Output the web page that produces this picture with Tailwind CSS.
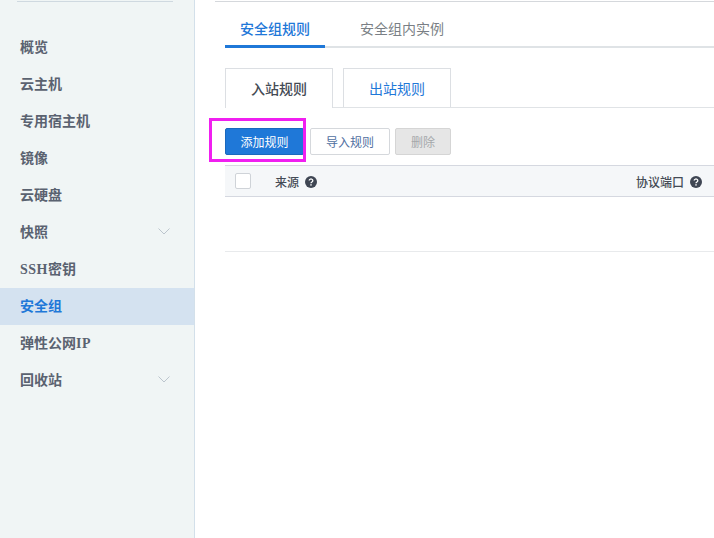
<!DOCTYPE html>
<html lang="zh-CN">
<head>
<meta charset="utf-8">
<script src="https://cdn.jsdelivr.net/npm/@tailwindcss/browser@4"></script>
</head>
<body class="bg-white overflow-hidden">
<div class="flex w-[714px] h-[538px] overflow-hidden font-['Liberation_Serif','Noto_Sans_CJK_SC',serif]">
  <aside class="w-[195px] h-full shrink-0 bg-[#f0f5f5] border-r border-[#d3e0ea]">
    <div class="mx-[17px] mt-px w-[156px] h-px bg-[#cfd9e0]"></div>
    <nav class="mt-[27px] flex flex-col text-[14px] font-bold text-[#5a6270]">
      <a class="h-[37px] pl-5 flex items-center">概览</a>
      <a class="h-[37px] pl-5 flex items-center">云主机</a>
      <a class="h-[37px] pl-5 flex items-center">专用宿主机</a>
      <a class="h-[37px] pl-5 flex items-center">镜像</a>
      <a class="h-[37px] pl-5 flex items-center">云硬盘</a>
      <a class="h-[37px] pl-5 pr-[24px] flex items-center justify-between">快照
        <svg width="12" height="7" viewBox="0 0 12 7" fill="none" stroke="#bcc5cd" class="mb-[3px]"><path d="M.5.5l5.5 5.5 5.5-5.5"/></svg></a>
      <a class="h-[37px] pl-5 flex items-center"><span class="tracking-[0.5px]">SSH</span>密钥</a>
      <a class="h-[37px] pl-5 flex items-center bg-[#d4e2f0] text-[#1f78d8]">安全组</a>
      <a class="h-[37px] pl-5 flex items-center">弹性公网<span class="tracking-[0.5px]">IP</span></a>
      <a class="h-[37px] pl-5 pr-[24px] flex items-center justify-between">回收站
        <svg width="12" height="7" viewBox="0 0 12 7" fill="none" stroke="#bcc5cd" class="mb-[3px]"><path d="M.5.5l5.5 5.5 5.5-5.5"/></svg></a>
    </nav>
  </aside>
  <main class="relative flex-1 min-w-0 pt-px font-['Noto_Sans_CJK_SC','DejaVu_Sans',sans-serif]">
    <div class="ml-5 h-px bg-[#d5d8dc]"></div>
    <div class="ml-[30px] mt-[9px] flex h-[37px] border-b-2 border-[#dfe3e6] text-[14px]">
      <div class="w-[100px] h-[37px] border-b-[3px] border-[#1f78d8] flex items-center justify-center font-medium text-[#1f78d8]">安全组规则</div>
      <div class="w-[119px] h-[35px] flex items-center justify-end text-[#7a7f85]">安全组内实例</div>
    </div>
    <div class="ml-[30px] mt-5 flex h-10 border-b border-[#e0e3e6] text-[14px]">
      <div class="w-[108px] h-10 bg-white border border-b-0 border-[#dcdfe3] flex items-center justify-center font-medium text-[#444b55]">入站规则</div>
      <div class="ml-2.5 w-[108px] h-[39px] border border-b-0 border-[#dcdfe3] flex items-center justify-center text-[#1f78d8]">出站规则</div>
    </div>
    <div class="ml-[30px] mt-5 flex h-[27px] text-[12px]">
      <button class="w-[79px] rounded-[2px] bg-[#1f78d8] border border-[#1a68bd] text-white">添加规则</button>
      <button class="ml-1.5 w-20 rounded-[2px] bg-white border border-[#d5d8dc] text-[#4f6f9f]">导入规则</button>
      <button class="ml-[5px] w-14 rounded-[2px] bg-[#e6e6e6] border border-[#d5d5d5] text-[#a5a8ab]">删除</button>
    </div>
    <div class="ml-[30px] mt-2.5 h-8 flex items-center bg-[#f5f7f9] border-y border-[#d5d8e0] text-[12px] font-medium text-[#444b55]">
      <span class="ml-2.5 w-4 h-4 bg-white border border-[#cfd3d8] rounded-[2px]"></span>
      <span class="ml-6 mt-0.5">来源</span>
      <svg class="ml-1.5 mt-0.5" width="12" height="12" viewBox="0 0 12 12"><circle cx="6" cy="6" r="6" fill="#3f4653"/><path d="M4.2 4.6a1.8 1.6 0 1 1 2.7 1.4c-.6.4-.9.6-.9 1.3" fill="none" stroke="#fff" stroke-width="1.3"/><rect x="5.3" y="8.2" width="1.4" height="1.4" fill="#fff"/></svg>
      <span class="ml-auto mt-0.5">协议端口</span>
      <svg class="ml-1.5 mr-3 mt-0.5" width="12" height="12" viewBox="0 0 12 12"><circle cx="6" cy="6" r="6" fill="#3f4653"/><path d="M4.2 4.6a1.8 1.6 0 1 1 2.7 1.4c-.6.4-.9.6-.9 1.3" fill="none" stroke="#fff" stroke-width="1.3"/><rect x="5.3" y="8.2" width="1.4" height="1.4" fill="#fff"/></svg>
    </div>
    <div class="ml-[30px] h-[55px] border-b border-[#e8eaec]"></div>
    <div class="absolute left-[14px] top-[118px] w-[97px] h-11 border-[3px] border-[#f01ff0]"></div>
  </main>
</div>
</body>
</html>
